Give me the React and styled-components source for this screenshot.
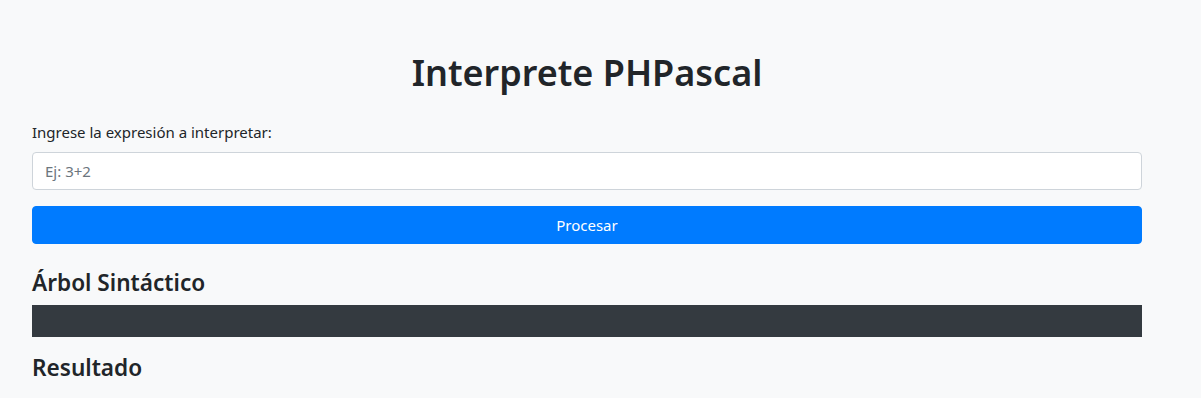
import React from 'react';
import styled, { createGlobalStyle } from 'styled-components';

const GlobalStyle = createGlobalStyle`
  html, body {
    margin: 0;
    padding: 0;
    background-color: #f8f9fa;
  }
  body {
    font-family: "Noto Sans", "Segoe UI", Roboto, sans-serif;
    font-size: 16px;
    line-height: 1.5;
    color: #212529;
  }
  * {
    box-sizing: border-box;
  }
`;

const Container = styled.div`
  width: 1110px;
  margin: 0 0 0 32px;
  padding-top: 49px;
`;

const Title = styled.h1`
  margin: 0 0 24px 0;
  text-align: center;
  font-size: 36px;
  font-weight: 600;
  line-height: 48px;
`;

const FormGroup = styled.div`
  margin-bottom: 16px;
`;

const Label = styled.label`
  display: block;
  margin-bottom: 8px;
  font-size: 15px;
`;

const Input = styled.input`
  display: block;
  width: 100%;
  height: 38px;
  padding: 6px 12px;
  font-family: inherit;
  font-size: 15px;
  color: #495057;
  background-color: #fff;
  border: 1px solid #ced4da;
  border-radius: 4px;
  outline: none;
  &::placeholder {
    color: #6c757d;
  }
`;

const Button = styled.button`
  display: block;
  width: 100%;
  height: 38px;
  padding: 6px 12px;
  font-family: inherit;
  font-size: 15px;
  color: #fff;
  background-color: #007bff;
  border: 1px solid #007bff;
  border-radius: 4px;
  cursor: pointer;
`;

const SectionTitle = styled.h4`
  margin: ${props => props.$top}px 0 8px 0;
  font-size: 22.6px;
  font-weight: 600;
  line-height: 29px;
`;

const TreeBox = styled.pre`
  margin: 0 0 16px 0;
  height: 32px;
  background-color: #343a40;
  color: #fff;
`;

export default function App() {
  return (
    <>
      <GlobalStyle />
      <Container>
        <Title>Interprete PHPascal</Title>
        <FormGroup>
          <Label htmlFor="expr">Ingrese la expresión a interpretar:</Label>
          <Input id="expr" type="text" placeholder="Ej: 3+2" />
        </FormGroup>
        <Button type="button">Procesar</Button>
        <SectionTitle $top={24}>Árbol Sintáctico</SectionTitle>
        <TreeBox></TreeBox>
        <SectionTitle $top={0}>Resultado</SectionTitle>
      </Container>
    </>
  );
}
